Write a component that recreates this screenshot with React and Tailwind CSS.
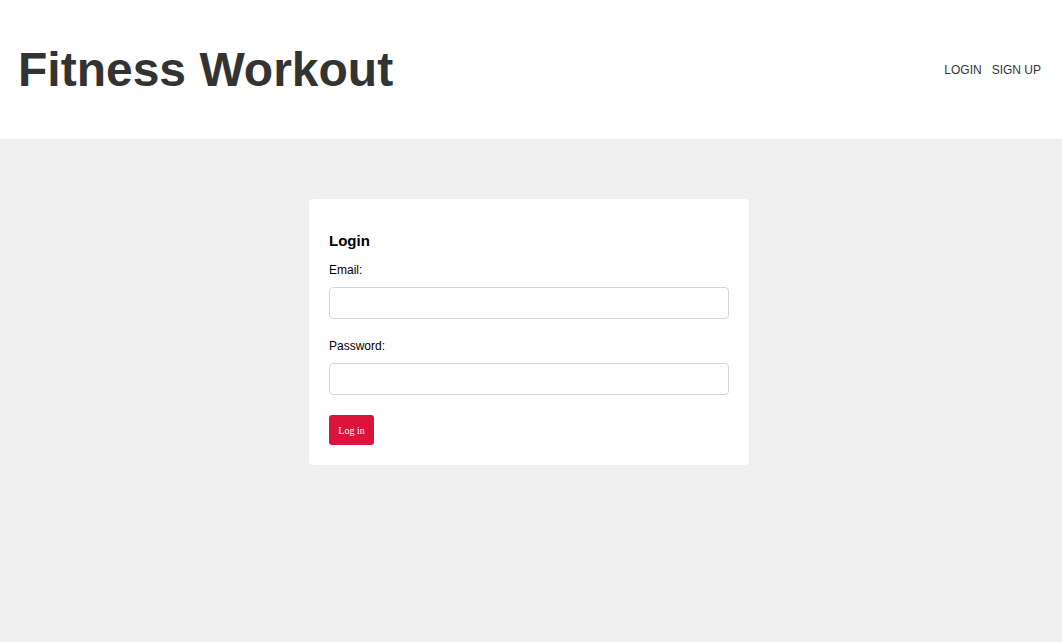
import React from 'react';

const App = () => {
    return (
        <div className="min-h-screen bg-[#f0f0f0] font-['Liberation_Sans',Arial,sans-serif]">
            <header className="h-[139px] bg-white flex items-center justify-between pl-[18px] pr-[21px]">
                <h1 className="text-[48px] font-bold text-[#333] leading-none">Fitness Workout</h1>
                <nav className="flex gap-[10px] text-[12px] text-[#333]">
                    <a href="#">LOGIN</a>
                    <a href="#">SIGN UP</a>
                </nav>
            </header>

            <main className="flex justify-center pt-[60px] pr-[4px]">
                <div className="w-[440px] bg-white rounded-[4px] px-5 pt-[33px] pb-5">
                    <h2 className="text-[15px] font-bold text-black leading-[17px] mb-[14px]">Login</h2>
                    <form>
                        <label className="block text-xs text-black leading-[14px] mb-[10px]">Email:</label>
                        <input type="email" className="block w-full h-8 border border-[#d6d6d6] rounded-[4px] mb-5" />
                        <label className="block text-xs text-black leading-[14px] mb-[10px]">Password:</label>
                        <input type="password" className="block w-full h-8 border border-[#d6d6d6] rounded-[4px] mb-5" />
                        <button type="button" className="h-[30px] w-[45px] bg-[#dc143c] text-white rounded-[3px] text-[10px] font-['Liberation_Serif',serif]">
                            Log in
                        </button>
                    </form>
                </div>
            </main>
        </div>
    );
};

export default App;
